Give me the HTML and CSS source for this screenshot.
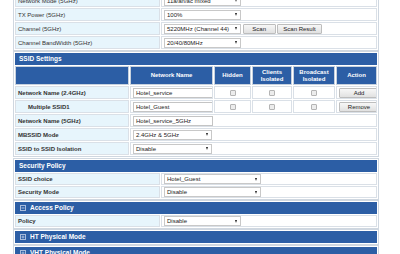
FILE: index.html
```html
<!DOCTYPE html>
<html lang="en">
<head>
    <meta charset="UTF-8"/>
    <title>Wireless Settings</title>
    <link rel="stylesheet" href="styles.css">
</head>
<body>
<div class="page">
    <!-- 5GHz 基本设置 -->
    <table class="sec">
        <colgroup><col class="c-lbl"><col></colgroup>
        <tr>
            <td class="lbl">Network Mode (5GHz)</td>
            <td class="val"><span class="sel w77">11a/an/ac mixed</span></td>
        </tr>
        <tr>
            <td class="lbl">TX Power (5GHz)</td>
            <td class="val"><span class="sel w77">100%</span></td>
        </tr>
        <tr>
            <td class="lbl">Channel (5GHz)</td>
            <td class="val">
                <span class="sel w77">5220MHz (Channel 44)</span>
                <span class="btn scan">Scan</span>
                <span class="btn">Scan Result</span>
            </td>
        </tr>
        <tr>
            <td class="lbl">Channel BandWidth (5GHz)</td>
            <td class="val"><span class="sel w77">20/40/80MHz</span></td>
        </tr>
    </table>

    <!-- SSID -->
    <table class="sec ssid">
        <colgroup>
            <col class="c-s1"><col class="c-s2"><col class="c-s3"><col class="c-s4"><col class="c-s5"><col>
        </colgroup>
        <tr><td class="title" colspan="6">SSID Settings</td></tr>
        <tr class="colh">
            <td></td>
            <td>Network Name</td>
            <td>Hidden</td>
            <td>Clients<br>Isolated</td>
            <td>Broadcast<br>Isolated</td>
            <td>Action</td>
        </tr>
        <tr>
            <td class="lbl b">Network Name (2.4GHz)</td>
            <td class="val"><span class="txt">Hotel_service</span></td>
            <td class="mid"><span class="cb"></span></td>
            <td class="mid"><span class="cb"></span></td>
            <td class="mid"><span class="cb"></span></td>
            <td class="mid"><span class="btn act">Add</span></td>
        </tr>
        <tr>
            <td class="lbl b sub">Multiple SSID1</td>
            <td class="val"><span class="txt">Hotel_Guest</span></td>
            <td class="mid"><span class="cb"></span></td>
            <td class="mid"><span class="cb"></span></td>
            <td class="mid"><span class="cb"></span></td>
            <td class="mid"><span class="btn act">Remove</span></td>
        </tr>
        <tr>
            <td class="lbl b">Network Name (5GHz)</td>
            <td class="val" colspan="5"><span class="txt">Hotel_service_5GHz</span></td>
        </tr>
        <tr>
            <td class="lbl b">MBSSID Mode</td>
            <td class="val" colspan="5"><span class="sel w79">2.4GHz &amp; 5GHz</span></td>
        </tr>
        <tr>
            <td class="lbl b">SSID to SSID Isolation</td>
            <td class="val" colspan="5"><span class="sel w79">Disable</span></td>
        </tr>
    </table>

    <!-- 安全策略 -->
    <table class="sec gap tight">
        <colgroup><col class="c-lbl"><col></colgroup>
        <tr><td class="title" colspan="2">Security Policy</td></tr>
        <tr>
            <td class="lbl b">SSID choice</td>
            <td class="val"><span class="sel w97">Hotel_Guest</span></td>
        </tr>
        <tr>
            <td class="lbl b">Security Mode</td>
            <td class="val"><span class="sel w97">Disable</span></td>
        </tr>
    </table>

    <table class="sec tight">
        <colgroup><col class="c-lbl"><col></colgroup>
        <tr>
            <td class="title" colspan="2">
                <svg class="tog" width="6" height="6" viewBox="0 0 6 6"><rect x="0.5" y="0.5" width="5" height="5" fill="none" stroke="#a8bcdc"/><path d="M1.5 3h3" stroke="#a8bcdc"/></svg>Access Policy
            </td>
        </tr>
        <tr>
            <td class="lbl b">Policy</td>
            <td class="val"><span class="sel w77">Disable</span></td>
        </tr>
    </table>

    <table class="sec">
        <tr>
            <td class="title">
                <svg class="tog" width="6" height="6" viewBox="0 0 6 6"><rect x="0.5" y="0.5" width="5" height="5" fill="none" stroke="#a8bcdc"/><path d="M1.5 3h3M3 1.5v3" stroke="#a8bcdc"/></svg>HT Physical Mode
            </td>
        </tr>
    </table>

    <table class="sec">
        <tr>
            <td class="title">
                <svg class="tog" width="6" height="6" viewBox="0 0 6 6"><rect x="0.5" y="0.5" width="5" height="5" fill="none" stroke="#a8bcdc"/><path d="M1.5 3h3M3 1.5v3" stroke="#a8bcdc"/></svg>VHT Physical Mode
            </td>
        </tr>
    </table>
</div>
</body>
</html>
```

FILE: styles.css
```css
body {
    margin: 0;
    background: #fff;
    color: #222;
    font-family: "Liberation Sans", Arial, sans-serif;
    font-size: 6px;
}

.page {
    width: 366px;
    margin-top: -8px;
    padding-left: 13px;
}

/* 每一块设置都是一张表 */
.sec {
    width: 366px;
    table-layout: fixed;
    border-collapse: separate;
    border-spacing: 1px;
    border: 1px solid #cfd7e0;
    background: #fff;
}

.sec.gap {
    margin-top: 1px;
}

.sec td {
    box-sizing: border-box;
    height: 13px;
    padding: 0 2px;
    border: 1px solid #dae0e7;
    vertical-align: middle;
    white-space: nowrap;
    overflow: hidden;
}

.sec.tight td {
    height: 12px;
}

.c-lbl { width: 145px; }
.c-s1 { width: 114px; }
.c-s2 { width: 83px; }
.c-s3 { width: 37px; }
.c-s4 { width: 40px; }
.c-s5 { width: 42px; }

.lbl {
    background: #e7f5fc;
    color: #333;
}

.b {
    font-weight: bold;
}

.sub {
    padding-left: 12px !important;
}

.mid {
    text-align: center;
}

.sec td.title {
    height: 12px;
    padding-left: 3px;
    background: #2c5ea5;
    border-color: #2c5ea5;
    color: #fff;
    font-size: 6.5px;
    font-weight: bold;
    line-height: 8px;
}

.tog {
    display: inline-block;
    margin: 0 4px 0 1px;
    vertical-align: -0.5px;
}

.colh td {
    background: #2c5ea5;
    border-color: #c6d1de;
    color: #fff;
    font-weight: bold;
    text-align: center;
    line-height: 6.5px;
}

.sec .colh td {
    height: 19px;
}

/* 模拟下拉框 */
.sel {
    display: inline-flex;
    align-items: center;
    justify-content: space-between;
    box-sizing: border-box;
    height: 10px;
    padding: 0 3px 0 2px;
    border: 1px solid #c8c8c8;
    background: #fff;
    color: #222;
    vertical-align: middle;
    overflow: hidden;
}

.sel::after {
    content: "";
    border-left: 1.5px solid transparent;
    border-right: 1.5px solid transparent;
    border-top: 3px solid #222;
}

.w77 { width: 77px; }
.w79 { width: 79px; }
.w97 { width: 97px; }

.txt {
    display: inline-block;
    box-sizing: border-box;
    width: 80px;
    height: 10px;
    padding-left: 2px;
    border: 1px solid #c4c4c4;
    background: #fff;
    line-height: 8px;
    vertical-align: middle;
}

.btn {
    display: inline-block;
    box-sizing: border-box;
    height: 10px;
    padding: 0 5px;
    border: 1px solid #bdbdbd;
    border-radius: 1px;
    background: linear-gradient(#f7f7f7, #e1e1e1);
    color: #222;
    line-height: 8px;
    text-align: center;
    vertical-align: middle;
}

.scan {
    width: 33px;
}

.act {
    width: 40px;
}

.cb {
    display: inline-block;
    width: 4px;
    height: 4px;
    border: 1px solid #b4b4b4;
    border-radius: 1px;
    background: #ececec;
    vertical-align: middle;
}
```
